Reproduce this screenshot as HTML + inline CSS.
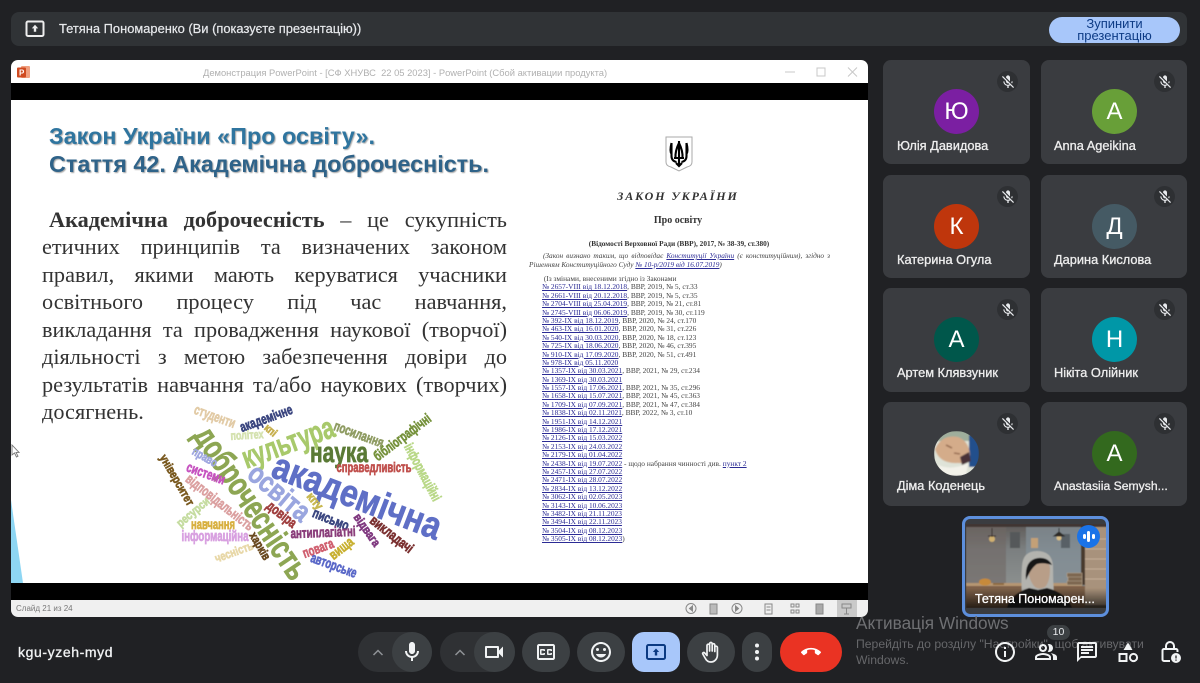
<!DOCTYPE html>
<html lang="uk"><head><meta charset="utf-8"><title>Meet</title>
<style>
html,body{margin:0;padding:0;width:1200px;height:683px;overflow:hidden;background:#202124;font-family:"Liberation Sans",sans-serif}
.a{position:absolute}
#bar{left:11px;top:12px;width:1176px;height:34px;background:#303336;border-radius:8px}
#win{left:11px;top:60px;width:857px;height:557px;background:#000;border-radius:7px;overflow:hidden}
.tile{position:absolute;width:147px;height:104px;background:#3a3c40;border-radius:8px}
.av{position:absolute;left:51px;top:29px;width:45px;height:45px;border-radius:50%;color:#fff;text-align:center;font-size:24px;line-height:45px}
.nm{position:absolute;left:14px;top:77px;color:#eee;font-size:12.8px;line-height:16px;white-space:nowrap;-webkit-text-stroke:.3px #eee}
.mu{position:absolute;right:12px;top:11px;width:21px;height:21px;border-radius:50%;background:#2e3033}
.mu svg{position:absolute;left:2.5px;top:2.5px;width:16px;height:16px;fill:#e8eaed}
.ln{position:absolute;font-family:"Liberation Serif",serif;font-size:22.3px;line-height:27px;height:27px;color:#333;text-align:justify;text-align-last:justify;white-space:nowrap}
#doc{font-family:"Liberation Serif",serif;color:#444;filter:blur(.25px)}
#doc a{color:#2b2b95;text-decoration:underline}
#list{left:542px;top:275px;font-size:7.4px;line-height:8.39px;white-space:nowrap}
.btn{position:absolute;top:632px;height:40px;border-radius:20px;background:#3c4043}
.btn svg{position:absolute;fill:#f1f3f4}
.ri{position:absolute;top:640px;width:24px;height:24px;fill:#f1f3f4}
#wc text{fill:currentColor;stroke:currentColor;stroke-width:.7px}
</style></head><body>

<div class="a" id="bar"></div>
<svg class="a" style="left:25px;top:20px" width="20" height="18" viewBox="0 0 20 18"><rect x="1.5" y="1.5" width="17" height="14.5" rx="1.5" fill="none" stroke="#eee" stroke-width="2"/><path d="M10 4.8l3.2 3.6h-2v3.4H8.800V8.400h-2z" fill="#eee"/></svg>
<div class="a" style="left:59px;top:21px;font-size:12.9px;line-height:16px;color:#e8eaed;white-space:nowrap;-webkit-text-stroke:.2px #e8eaed">Тетяна Пономаренко (Ви (показуєте презентацію))</div>
<div class="a" style="left:1049px;top:17px;width:131px;height:26px;border-radius:13px;background:#a8c7fa;color:#0d3b85;font-size:13px;line-height:12px;text-align:center;padding-top:1px;box-sizing:border-box">Зупинити<br>презентацію</div>

<div class="a" id="win">
  <div class="a" style="left:0;top:0;width:857px;height:23px;background:#fff"></div>
  <div class="a" style="left:0;top:40px;width:857px;height:483px;background:#fff"></div>
  <div class="a" style="left:0;top:540px;width:857px;height:17px;background:#f0f0f0"></div>
  <div class="a" style="left:826px;top:540px;width:20px;height:17px;background:#c9c9c9"></div>
</div>
<!-- title bar -->
<svg class="a" style="left:16px;top:65px" width="15" height="15" viewBox="0 0 15 15"><rect x="5" y="1" width="9" height="12" rx="1" fill="#f0a080"/><rect x="1" y="2.500" width="9" height="10" rx="1" fill="#cf4a20"/><text x="3" y="10.500" font-size="8" font-weight="700" fill="#fff" font-family="Liberation Sans">P</text></svg>
<div class="a" style="left:203px;top:67px;font-size:9.37px;line-height:12px;color:#b0b0b0;white-space:nowrap">Демонстрация PowerPoint - [СФ ХНУВС&nbsp; 22 05 2023] - PowerPoint (Сбой активации продукта)</div>
<svg class="a" style="left:780px;top:64px" width="84" height="16" viewBox="0 0 84 16" fill="none" stroke="#c8c8c8"><path d="M5 8h10"/><rect x="37" y="4" width="8" height="8"/><path d="M68 3.500l9 9M77 3.500l-9 9"/></svg>

<!-- slide title -->
<svg class="a" style="left:11px;top:100px;filter:drop-shadow(1px 1px .6px rgba(90,90,90,.55))" width="520" height="90" viewBox="11 100 520 90">
<text x="49" y="144" font-family="Liberation Sans" font-weight="700" font-size="23" fill="#2f759f" textLength="326" lengthAdjust="spacingAndGlyphs">Закон України «Про освіту».</text>
<text x="49" y="172" font-family="Liberation Sans" font-weight="700" font-size="23" fill="#2f6389" textLength="440" lengthAdjust="spacingAndGlyphs">Стаття 42. Академічна доброчесність.</text>
</svg>

<!-- body -->
<div class="ln" style="left:49px;top:206px;width:458px"><b>Академічна доброчесність</b> – це сукупність</div>
<div class="ln" style="left:42px;top:233px;width:465px">етичних принципів та визначених законом</div>
<div class="ln" style="left:42px;top:261px;width:465px">правил, якими мають керуватися учасники</div>
<div class="ln" style="left:42px;top:288px;width:465px">освітнього процесу під час навчання,</div>
<div class="ln" style="left:42px;top:316px;width:465px">викладання та провадження наукової (творчої)</div>
<div class="ln" style="left:42px;top:343px;width:465px">діяльності з метою забезпечення довіри до</div>
<div class="ln" style="left:42px;top:371px;width:465px">результатів навчання та/або наукових (творчих)</div>
<div class="ln" style="left:42px;top:398px;text-align-last:left">досягнень.</div>

<!-- triangle and cursor -->
<svg class="a" style="left:11px;top:500px" width="14" height="83" viewBox="0 0 14 83"><path d="M0 0L12 83H0z" fill="#8ed6f3"/></svg>
<svg class="a" style="left:11px;top:444px" width="9" height="14" viewBox="0 0 9 14"><path d="M1 1v10l2.500-2 2 4 1.500-.8-2-3.800h3z" fill="#fff" stroke="#777" stroke-width=".9"/></svg>

<!-- word cloud -->
<svg class="a" style="left:150px;top:400px;filter:blur(.35px)" width="300" height="183" viewBox="150 400 300 183" font-family="Liberation Sans" font-weight="700" text-anchor="middle">
<g id="wc">
<text transform="translate(251,503) rotate(56)" y="11" font-size="34" color="#8da653" textLength="177" lengthAdjust="spacingAndGlyphs">доброчесність</text>
<text transform="translate(357,497) rotate(21)" y="12" font-size="38" color="#5f6fc6" textLength="178" lengthAdjust="spacingAndGlyphs">академічна</text>
<text transform="translate(288,443) rotate(-20)" y="10" font-size="31" color="#a8c96b" textLength="96" lengthAdjust="spacingAndGlyphs">культура</text>
<text transform="translate(339,453)" y="9" font-size="29" color="#5a7a35" textLength="58" lengthAdjust="spacingAndGlyphs">наука</text>
<text transform="translate(279,493) rotate(40)" y="9" font-size="29" color="#9aa6df" textLength="72" lengthAdjust="spacingAndGlyphs">освіта</text>
<text transform="translate(374,467)" y="5" font-size="14" color="#c0504d" textLength="75" lengthAdjust="spacingAndGlyphs">справедливість</text>
<text transform="translate(402,437) rotate(-37)" y="5" font-size="14" color="#76923c" textLength="68" lengthAdjust="spacingAndGlyphs">бібліографічні</text>
<text transform="translate(359,434) rotate(20)" y="5" font-size="14" color="#8f9c63" textLength="52" lengthAdjust="spacingAndGlyphs">посилання</text>
<text transform="translate(423,472) rotate(62)" y="5" font-size="14" color="#b9d888" textLength="63" lengthAdjust="spacingAndGlyphs">інформаційні</text>
<text transform="translate(215,416) rotate(20)" y="5" font-size="14" color="#e2cba6" textLength="43" lengthAdjust="spacingAndGlyphs">студенти</text>
<text transform="translate(266,418) rotate(-20)" y="5" font-size="14" color="#3c4780" textLength="55" lengthAdjust="spacingAndGlyphs">академічне</text>
<text transform="translate(271,430) rotate(40)" y="4" font-size="11" color="#c7b04f" textLength="13" lengthAdjust="spacingAndGlyphs">кпі</text>
<text transform="translate(247,435) rotate(-3)" y="4" font-size="12" color="#d5e2b0" textLength="33" lengthAdjust="spacingAndGlyphs">політех</text>
<text transform="translate(205,457) rotate(30)" y="4" font-size="12" color="#a0a8e0" textLength="27" lengthAdjust="spacingAndGlyphs">право</text>
<text transform="translate(206,473) rotate(20)" y="5" font-size="14" color="#c653c0" textLength="40" lengthAdjust="spacingAndGlyphs">системи</text>
<text transform="translate(177,480) rotate(60)" y="4" font-size="12" color="#7a5a20" textLength="57" lengthAdjust="spacingAndGlyphs">університет</text>
<text transform="translate(220,502) rotate(38)" y="5" font-size="14" color="#dba0a0" textLength="82" lengthAdjust="spacingAndGlyphs">відповідальність</text>
<text transform="translate(193,512) rotate(-40)" y="4" font-size="12" color="#c5dca0" textLength="39" lengthAdjust="spacingAndGlyphs">ресурси</text>
<text transform="translate(213,524)" y="5" font-size="14" color="#d8b040" textLength="44" lengthAdjust="spacingAndGlyphs">навчання</text>
<text transform="translate(215,536)" y="5" font-size="15" color="#d8a0e0" textLength="67" lengthAdjust="spacingAndGlyphs">інформаційна</text>
<text transform="translate(234,552) rotate(-20)" y="4" font-size="12" color="#e8d8a8" textLength="40" lengthAdjust="spacingAndGlyphs">чесність</text>
<text transform="translate(260,546) rotate(60)" y="4" font-size="12" color="#6a4a20" textLength="30" lengthAdjust="spacingAndGlyphs">харків</text>
<text transform="translate(282,514) rotate(38)" y="5" font-size="14" color="#a04040" textLength="34" lengthAdjust="spacingAndGlyphs">довіра</text>
<text transform="translate(315,501) rotate(50)" y="4" font-size="12" color="#c8b850" textLength="18" lengthAdjust="spacingAndGlyphs">кпу</text>
<text transform="translate(331,519) rotate(22)" y="5" font-size="14" color="#3c4780" textLength="38" lengthAdjust="spacingAndGlyphs">письмо</text>
<text transform="translate(323,532) rotate(-2)" y="5" font-size="14" color="#8a3d7a" textLength="65" lengthAdjust="spacingAndGlyphs">антиплагіатні</text>
<text transform="translate(367,530) rotate(55)" y="4" font-size="12" color="#803a80" textLength="37" lengthAdjust="spacingAndGlyphs">відвага</text>
<text transform="translate(392,534) rotate(38)" y="5" font-size="14" color="#7a3030" textLength="51" lengthAdjust="spacingAndGlyphs">викладачі</text>
<text transform="translate(318,548) rotate(-20)" y="5" font-size="14" color="#d06070" textLength="32" lengthAdjust="spacingAndGlyphs">повага</text>
<text transform="translate(341,548) rotate(-38)" y="5" font-size="14" color="#c8b030" textLength="27" lengthAdjust="spacingAndGlyphs">вища</text>
<text transform="translate(334,565) rotate(20)" y="5" font-size="14" color="#5a68c8" textLength="48" lengthAdjust="spacingAndGlyphs">авторське</text>
</g>
</svg>

<!-- document -->
<div class="a" id="doc" style="left:0;top:0;width:868px;height:600px">
<svg class="a" style="left:665px;top:136px" width="28" height="37" viewBox="0 0 28 37"><path d="M1 1h26v25q0 4-5 5l-8 4-8-4q-5-1-5-5z" fill="#fff" stroke="#aaa"/><path d="M14 5v24M6.500 7v13q0 5 5 6M21.500 7v13q0 5-5 6M6.500 7q-2 8 0 11M21.500 7q2 8 0 11M14 7q-4 8-3.500 15M14 7q4 8 3.500 15M9 22h10M11 27l3 3 3-3" fill="none" stroke="#000" stroke-width="2.100"/></svg>
<div class="a" style="left:578px;top:189px;width:200px;text-align:center;font-size:12px;line-height:15px;font-weight:700;font-style:italic;letter-spacing:1.9px;color:#333">ЗАКОН УКРАЇНИ</div>
<div class="a" style="left:578px;top:214px;width:200px;text-align:center;font-size:10px;line-height:14px;font-weight:700;color:#333">Про освіту</div>
<div class="a" style="left:529px;top:238px;width:300px;text-align:center;font-size:7.300px;line-height:11px;font-weight:700;color:#333;white-space:nowrap">(Відомості Верховної Ради (ВВР), 2017, № 38-39, ст.380)</div>
<div class="a" style="left:543px;top:251px;width:287px;font-size:7.300px;line-height:10px;font-style:italic;white-space:nowrap;text-align:justify;text-align-last:justify">(Закон визнано таким, що відповідає <a>Конституції України</a> (є конституційним), згідно з</div>
<div class="a" style="left:529px;top:260px;font-size:7.300px;line-height:10px;font-style:italic;white-space:nowrap">Рішенням Конституційного Суду <a>№ 10-р/2019 від 16.07.2019</a>)</div>
<div class="a" id="list">&nbsp;(Із змінами, внесеними згідно із Законами<br>
<a>№ 2657-VIII від 18.12.2018</a>, ВВР, 2019, № 5, ст.33<br>
<a>№ 2661-VIII від 20.12.2018</a>, ВВР, 2019, № 5, ст.35<br>
<a>№ 2704-VIII від 25.04.2019</a>, ВВР, 2019, № 21, ст.81<br>
<a>№ 2745-VIII від 06.06.2019</a>, ВВР, 2019, № 30, ст.119<br>
<a>№ 392-IX від 18.12.2019</a>, ВВР, 2020, № 24, ст.170<br>
<a>№ 463-IX від 16.01.2020</a>, ВВР, 2020, № 31, ст.226<br>
<a>№ 540-IX від 30.03.2020</a>, ВВР, 2020, № 18, ст.123<br>
<a>№ 725-IX від 18.06.2020</a>, ВВР, 2020, № 46, ст.395<br>
<a>№ 910-IX від 17.09.2020</a>, ВВР, 2020, № 51, ст.491<br>
<a>№ 978-IX від 05.11.2020</a><br>
<a>№ 1357-IX від 30.03.2021</a>, ВВР, 2021, № 29, ст.234<br>
<a>№ 1369-IX від 30.03.2021</a><br>
<a>№ 1557-IX від 17.06.2021</a>, ВВР, 2021, № 35, ст.296<br>
<a>№ 1658-IX від 15.07.2021</a>, ВВР, 2021, № 45, ст.363<br>
<a>№ 1709-IX від 07.09.2021</a>, ВВР, 2021, № 47, ст.384<br>
<a>№ 1838-IX від 02.11.2021</a>, ВВР, 2022, № 3, ст.10<br>
<a>№ 1951-IX від 14.12.2021</a><br>
<a>№ 1986-IX від 17.12.2021</a><br>
<a>№ 2126-IX від 15.03.2022</a><br>
<a>№ 2153-IX від 24.03.2022</a><br>
<a>№ 2179-IX від 01.04.2022</a><br>
<a>№ 2438-IX від 19.07.2022</a> - щодо набрання чинності див. <a>пункт 2</a><br>
<a>№ 2457-IX від 27.07.2022</a><br>
<a>№ 2471-IX від 28.07.2022</a><br>
<a>№ 2834-IX від 13.12.2022</a><br>
<a>№ 3062-IX від 02.05.2023</a><br>
<a>№ 3143-IX від 10.06.2023</a><br>
<a>№ 3482-IX від 21.11.2023</a><br>
<a>№ 3494-IX від 22.11.2023</a><br>
<a>№ 3504-IX від 08.12.2023</a><br>
<a>№ 3505-IX від 08.12.2023</a>)</div>
</div>

<!-- status bar -->
<div class="a" style="left:16px;top:603px;font-size:8px;line-height:12px;color:#777;white-space:nowrap">Слайд 21 из 24</div>
<svg class="a" style="left:680px;top:600px" width="180" height="17" viewBox="680 600 180 17" fill="none" stroke="#888">
<circle cx="691" cy="608.500" r="5"/><path d="M692.500 606v5l-3-2.500z" fill="#888"/>
<rect x="710" y="604" width="7" height="10" fill="#bbb"/>
<circle cx="737" cy="608.500" r="5"/><path d="M735.500 606v5l3-2.500z" fill="#888"/>
<rect x="765" y="604" width="7" height="10"/><path d="M766.500 607h4M766.500 610h4"/>
<path d="M791 604h3v3h-3zM796 604h3v3h-3zM791 610h3v3h-3zM796 610h3v3h-3z"/>
<rect x="816" y="604" width="7" height="10" fill="#aaa"/>
<path d="M842 604h9v4h-9zM846.500 608v6M844 614h5"/>
</svg>

<!-- tiles -->
<div class="tile" style="left:883px;top:60px"><div class="av" style="background:#7b1fa2">Ю</div><div class="nm" style="top:78px">Юлія Давидова</div><div class="mu"><svg viewBox="0 0 24 24"><use href="#mo"/></svg></div></div>
<div class="tile" style="left:1041px;top:60px;width:146px"><div class="av" style="background:#689f38">А</div><div class="nm" style="top:78px;left:13px">Anna Ageikina</div><div class="mu"><svg viewBox="0 0 24 24"><use href="#mo"/></svg></div></div>
<div class="tile" style="left:883px;top:175px;height:103px"><div class="av" style="background:#bf360c">К</div><div class="nm">Катерина Огула</div><div class="mu"><svg viewBox="0 0 24 24"><use href="#mo"/></svg></div></div>
<div class="tile" style="left:1041px;top:175px;width:146px;height:103px"><div class="av" style="background:#455a64">Д</div><div class="nm" style="left:13px">Дарина Кислова</div><div class="mu"><svg viewBox="0 0 24 24"><use href="#mo"/></svg></div></div>
<div class="tile" style="left:883px;top:288px"><div class="av" style="background:#00574b">А</div><div class="nm">Артем Клявзуник</div><div class="mu"><svg viewBox="0 0 24 24"><use href="#mo"/></svg></div></div>
<div class="tile" style="left:1041px;top:288px;width:146px"><div class="av" style="background:#0097a7">Н</div><div class="nm" style="left:13px">Нікіта Олійник</div><div class="mu"><svg viewBox="0 0 24 24"><use href="#mo"/></svg></div></div>
<div class="tile" style="left:883px;top:402px"><svg class="a" style="left:51px;top:29px" width="45" height="45" viewBox="0 0 45 45"><defs><clipPath id="cp"><circle cx="22.500" cy="22.500" r="22.500"/></clipPath><filter id="bb"><feGaussianBlur stdDeviation=".8"/></filter></defs><g clip-path="url(#cp)"><g filter="url(#bb)"><rect width="45" height="45" fill="#dfe3d8"/><path d="M0 0h45v10H0z" fill="#9fae9c"/><path d="M35 4h10v32h-10z" fill="#23508c"/><path d="M1 18Q8 3 24 6q11 4 12 18-2 9-12 8Q5 33 1 18z" fill="#d4ac8a"/><path d="M12 14l6 3M20 22l6 1" stroke="#8a5f45" stroke-width="1.300" fill="none"/><path d="M4 34q14 6 30-2l-2 13H8z" fill="#f3f2ea"/><path d="M26 26l9-5 2 9-9 4z" fill="#4a3338"/></g></g></svg><div class="nm" style="top:76px">Діма Коденець</div><div class="mu"><svg viewBox="0 0 24 24"><use href="#mo"/></svg></div></div>
<div class="tile" style="left:1041px;top:402px;width:146px"><div class="av" style="background:#33691e">А</div><div class="nm" style="top:76px;left:13px;font-size:12.200px">Anastasiia Semysh...</div><div class="mu"><svg viewBox="0 0 24 24"><use href="#mo"/></svg></div></div>

<svg width="0" height="0" style="position:absolute"><defs><path id="mo" d="M19 11h-1.700c0 .74-.16 1.430-.43 2.050l1.230 1.230c.56-.98.9-2.090.9-3.280zm-4.020.17c0-.06.02-.11.02-.17V5c0-1.660-1.340-3-3-3S9 3.340 9 5v.18l5.980 5.990zM4.270 3L3 4.270l6.010 6.010V11c0 1.660 1.330 3 2.990 3 .22 0 .44-.03.65-.08l1.660 1.660c-.71.33-1.500.52-2.310.52-2.760 0-5.300-2.100-5.300-5.100H5c0 3.410 2.720 6.230 6 6.720V21h2v-3.280c.91-.13 1.770-.45 2.540-.9L19.730 21 21 19.730 4.270 3z"/></defs></svg>

<!-- self tile -->
<div class="a" style="left:962px;top:516px;width:147px;height:101px;box-sizing:border-box;border:3px solid #5d8fdc;border-radius:8px;background:#3a3c40;overflow:hidden">
<svg class="a" style="left:1px;top:5px" width="141" height="84" viewBox="0 0 141 84">
<defs>
<linearGradient id="wg" x1="0" y1="0" x2="0" y2="1"><stop offset="0" stop-color="#5f5b58"/><stop offset=".3" stop-color="#7b7f80"/><stop offset=".7" stop-color="#8b8f8e"/><stop offset="1" stop-color="#6d5a48"/></linearGradient>
<linearGradient id="bot" x1="0" y1="0" x2="0" y2="1"><stop offset="0" stop-color="#000" stop-opacity="0"/><stop offset="1" stop-color="#000" stop-opacity=".7"/></linearGradient>
<filter id="sb"><feGaussianBlur stdDeviation=".6"/></filter>
</defs>
<g filter="url(#sb)">
<rect width="141" height="84" fill="url(#wg)"/>
<rect width="141" height="3" fill="#3f3630"/>
<rect x="0" y="3" width="40" height="56" fill="#6f6764" opacity=".6"/>
<rect x="60" y="3" width="55" height="56" fill="#84929a" opacity=".7"/>
<rect x="44" y="8" width="10" height="16" fill="#55585a"/>
<rect x="65" y="14" width="7" height="10" fill="#c3a077"/>
<rect x="95" y="10" width="9" height="14" fill="#596066"/>
<rect x="115" y="3" width="4" height="58" fill="#4a3a2e"/>
<rect x="119" y="3" width="22" height="78" fill="#a8927b"/>
<path d="M119 15h22M119 25h22M119 35h22M119 45h22M119 55h22" stroke="#c5b098"/>
<rect x="0" y="62" width="119" height="22" fill="#7e6149"/>
<rect x="0" y="59" width="116" height="3" fill="#b59672"/>
<ellipse cx="19" cy="58" rx="6" ry="3.500" fill="#c68a3a"/>
<rect x="27" y="59" width="11" height="2" fill="#8f6a3f"/>
<path d="M101 49h15v4h-15zM102 53h14v4h-14zM101 57h15v4h-15z" fill="#7c6650" stroke="#b8a58f" stroke-width=".6"/>
<circle cx="26" cy="15" r="3" fill="#d0b070"/><path d="M26 4v9M22 12h8" stroke="#352c26"/>
<circle cx="93" cy="14" r="2.500" fill="#d8bd86"/><path d="M93 4v6M88 12l5-4 5 4z" stroke="#2d2a28" fill="#2d2a28"/>
<path d="M56 72q-1-16 0-30 1-15 15-15 15 0 16 15 0 15 1 30z" fill="#b3b3ae"/>
<path d="M62 44q1-9 10-9 11 0 12 9 0 14-5 19-6 3-10 0-6-6-7-19z" fill="#b89e88"/>
<path d="M60 56q-2-20 12-22 10-1 14 7-9-3-15-1-6 4-11 16z" fill="#141416"/>
<path d="M41 84q3-14 22-20l9 2 9-2q20 5 25 20z" fill="#1a1816"/>
<rect y="64" width="141" height="20" fill="url(#bot)"/>
</g>
</svg>
<div class="a" style="left:10px;top:72px;color:#fff;font-size:12.500px;line-height:16px;white-space:nowrap;-webkit-text-stroke:.3px #fff">Тетяна Пономарен...</div>
<div class="a" style="left:112px;top:6px;width:23px;height:23px;border-radius:50%;background:#1a73e8"></div>
<div class="a" style="left:118px;top:15px;width:3px;height:5px;border-radius:2px;background:#fff"></div>
<div class="a" style="left:122px;top:12px;width:3px;height:11px;border-radius:2px;background:#fff"></div>
<div class="a" style="left:127px;top:15px;width:3px;height:5px;border-radius:2px;background:#fff"></div>
</div>

<!-- bottom left -->
<div class="a" style="left:18px;top:643px;color:#f1f3f4;font-size:14px;line-height:18px;letter-spacing:.6px;white-space:nowrap;-webkit-text-stroke:.3px #f1f3f4">kgu-yzeh-myd</div>

<!-- controls -->
<div class="btn" style="left:358px;width:74px;background:#2f3134"></div>
<svg class="a" style="left:371px;top:648px" width="14" height="9" viewBox="0 0 14 9" fill="none" stroke="#8f9296" stroke-width="1.500"><path d="M2.500 7l4.500-4.500L11.500 7"/></svg>
<div class="btn" style="left:392px;width:40px"><svg style="left:8px;top:8px" width="24" height="24" viewBox="0 0 24 24"><path d="M12 14c1.660 0 3-1.340 3-3V5c0-1.660-1.340-3-3-3S9 3.340 9 5v6c0 1.660 1.340 3 3 3zm5-3c0 2.760-2.240 5-5 5s-5-2.240-5-5H5c0 3.530 2.610 6.430 6 6.920V21h2v-3.080c3.390-.49 6-3.390 6-6.920h-2z"/></svg></div>

<div class="btn" style="left:440px;width:75px;background:#2f3134"></div>
<svg class="a" style="left:453px;top:648px" width="14" height="9" viewBox="0 0 14 9" fill="none" stroke="#8f9296" stroke-width="1.500"><path d="M2.500 7l4.500-4.500L11.500 7"/></svg>
<div class="btn" style="left:474px;width:41px"><svg style="left:8px;top:8px" width="24" height="24" viewBox="0 0 24 24"><path d="M15 8v8H5V8h10m1-2H4c-.55 0-1 .45-1 1v10c0 .55.45 1 1 1h12c.55 0 1-.45 1-1v-3.500l4 4v-11l-4 4V7c0-.55-.45-1-1-1z"/></svg></div>

<div class="btn" style="left:522px;width:48px"><svg style="left:12px;top:8px" width="24" height="24" viewBox="0 0 24 24"><path d="M19 4H5c-1.110 0-2 .9-2 2v12c0 1.100.89 2 2 2h14c1.100 0 2-.9 2-2V6c0-1.100-.9-2-2-2zm0 14H5V6h14v12zM7 15h3c.55 0 1-.45 1-1v-1H9.500v.5h-2v-3h2v.5H11v-1c0-.55-.45-1-1-1H7c-.55 0-1 .45-1 1v4c0 .55.45 1 1 1zm7 0h3c.55 0 1-.45 1-1v-1h-1.500v.5h-2v-3h2v.5H18v-1c0-.55-.45-1-1-1h-3c-.55 0-1 .45-1 1v4c0 .55.45 1 1 1z"/></svg></div>

<div class="btn" style="left:577px;width:48px"><svg style="left:12px;top:8px" width="24" height="24" viewBox="0 0 24 24"><path d="M11.990 2C6.470 2 2 6.480 2 12s4.470 10 9.990 10C17.520 22 22 17.520 22 12S17.520 2 11.990 2zM12 20c-4.420 0-8-3.580-8-8s3.580-8 8-8 8 3.580 8 8-3.580 8-8 8z"/><circle cx="8.500" cy="9.500" r="1.500"/><circle cx="15.500" cy="9.500" r="1.500"/><path d="M12 17.500c2.330 0 4.310-1.460 5.110-3.500H6.890c.8 2.040 2.780 3.500 5.110 3.500z"/></svg></div>

<div class="btn" style="left:632px;width:48px;border-radius:12px;background:#a8c7fa"><svg style="left:12px;top:8px" width="24" height="24" viewBox="0 0 24 24"><rect x="3" y="5" width="18" height="14" rx="1.500" fill="none" stroke="#0b3a82" stroke-width="2"/><path d="M12 8.500l3.200 3.500h-2v3.500h-2.400V12h-2z" fill="#0b3a82"/></svg></div>

<div class="btn" style="left:687px;width:48px"><svg style="left:12px;top:8px" width="24" height="24" viewBox="0 0 24 24"><path d="M8 13V5.500a1.300 1.300 0 0 1 2.600 0V11V3.800a1.300 1.300 0 0 1 2.600 0V11V5a1.300 1.300 0 0 1 2.600 0V11.500V7.500a1.300 1.300 0 0 1 2.600 0V15c0 4-3 7-6.500 7-3 0-4.500-1.500-5.500-3.500L3.800 14c-.5-1 .9-2 1.800-1.100L8 15.500z" fill="none" stroke="#f1f3f4" stroke-width="1.700" stroke-linejoin="round"/></svg></div>

<div class="btn" style="left:742px;width:30px"><svg style="left:3px;top:8px" width="24" height="24" viewBox="0 0 24 24"><circle cx="12" cy="5.500" r="2"/><circle cx="12" cy="12" r="2"/><circle cx="12" cy="18.500" r="2"/></svg></div>

<div class="btn" style="left:780px;width:62px;background:#ea3323"><svg style="left:21px;top:10px" width="20" height="20" viewBox="0 0 24 24"><path fill="#fff" d="M12 9c-1.600 0-3.150.25-4.600.72v3.100c0 .39-.23.74-.56.9-.98.49-1.870 1.120-2.660 1.850-.18.18-.43.28-.7.28-.28 0-.53-.11-.71-.29L.29 13.080c-.18-.17-.29-.42-.29-.7 0-.28.11-.53.29-.71C3.340 8.780 7.460 7 12 7s8.660 1.780 11.710 4.670c.18.18.29.43.29.71 0 .28-.11.53-.29.71l-2.480 2.480c-.18.18-.43.29-.71.29-.27 0-.52-.11-.7-.28-.79-.74-1.690-1.360-2.670-1.850-.33-.16-.56-.5-.56-.9v-3.100C15.150 9.250 13.600 9 12 9z"/></svg></div>

<!-- watermark -->
<div class="a" style="left:856px;top:614px;font-size:17.200px;line-height:19px;color:#6f7073;white-space:nowrap">Активація Windows</div>
<div class="a" style="left:856px;top:636px;font-size:12.200px;line-height:16px;color:#66676a;white-space:nowrap">Перейдіть до розділу "Настройки", щоб активувати<br>Windows.</div>

<!-- right icons -->
<div class="a" style="left:1047px;top:625px;width:23px;height:15px;border-radius:8px;background:#3c4043;color:#e8eaed;font-size:10.500px;line-height:15px;text-align:center">10</div>
<svg class="ri" style="left:993px" viewBox="0 0 24 24"><path d="M11 7h2v2h-2zm0 4h2v6h-2zm1-9C6.480 2 2 6.480 2 12s4.480 10 10 10 10-4.480 10-10S17.520 2 12 2zm0 18c-4.410 0-8-3.590-8-8s3.590-8 8-8 8 3.590 8 8-3.590 8-8 8z"/></svg>
<svg class="ri" style="left:1034px" viewBox="0 0 24 24"><path d="M16.670 13.130C18.040 14.060 19 15.320 19 17v3h4v-3c0-2.180-3.570-3.470-6.330-3.870zM15 12c2.210 0 4-1.790 4-4s-1.790-4-4-4c-.47 0-.91.1-1.330.24C14.500 5.270 15 6.580 15 8s-.5 2.730-1.330 3.760c.42.14.86.24 1.330.24zM9 12c2.210 0 4-1.790 4-4s-1.790-4-4-4-4 1.790-4 4 1.790 4 4 4zm0-6c1.100 0 2 .9 2 2s-.9 2-2 2-2-.9-2-2 .9-2 2-2zM9 13c-2.670 0-8 1.340-8 4v3h16v-3c0-2.660-5.330-4-8-4zm6 5H3v-.99C3.200 16.290 6.300 15 9 15s5.800 1.290 6 2v1z"/></svg>
<svg class="ri" style="left:1075px" viewBox="0 0 24 24"><path d="M20 2H4c-1.100 0-2 .9-2 2v18l4-4h14c1.100 0 2-.9 2-2V4c0-1.100-.9-2-2-2zm0 14H6l-2 2V4h16v12zM6 12h8v2H6zM6 9h12v2H6zM6 6h12v2H6z"/></svg>
<svg class="ri" style="left:1116px" viewBox="0 0 24 24"><path d="M12 2.500l4.500 7.500h-9z"/><path d="M3.500 14h7v7h-7z" fill="none" stroke="#f1f3f4" stroke-width="2"/><circle cx="17.500" cy="17.500" r="3.600" fill="none" stroke="#f1f3f4" stroke-width="2"/></svg>
<svg class="ri" style="left:1158px" viewBox="0 0 24 24"><path d="M8 9V6a4 4 0 0 1 8 0v3" fill="none" stroke="#f1f3f4" stroke-width="2"/><path d="M12 21H6a1.500 1.500 0 0 1-1.500-1.500v-9A1.500 1.500 0 0 1 6 9h12a1.500 1.500 0 0 1 1.500 1.500V12" fill="none" stroke="#f1f3f4" stroke-width="2"/><circle cx="18" cy="18" r="5"/><path d="M18 15.500v3M18 19.500v1.200" stroke="#202124" stroke-width="1.300"/></svg>

</body></html>
